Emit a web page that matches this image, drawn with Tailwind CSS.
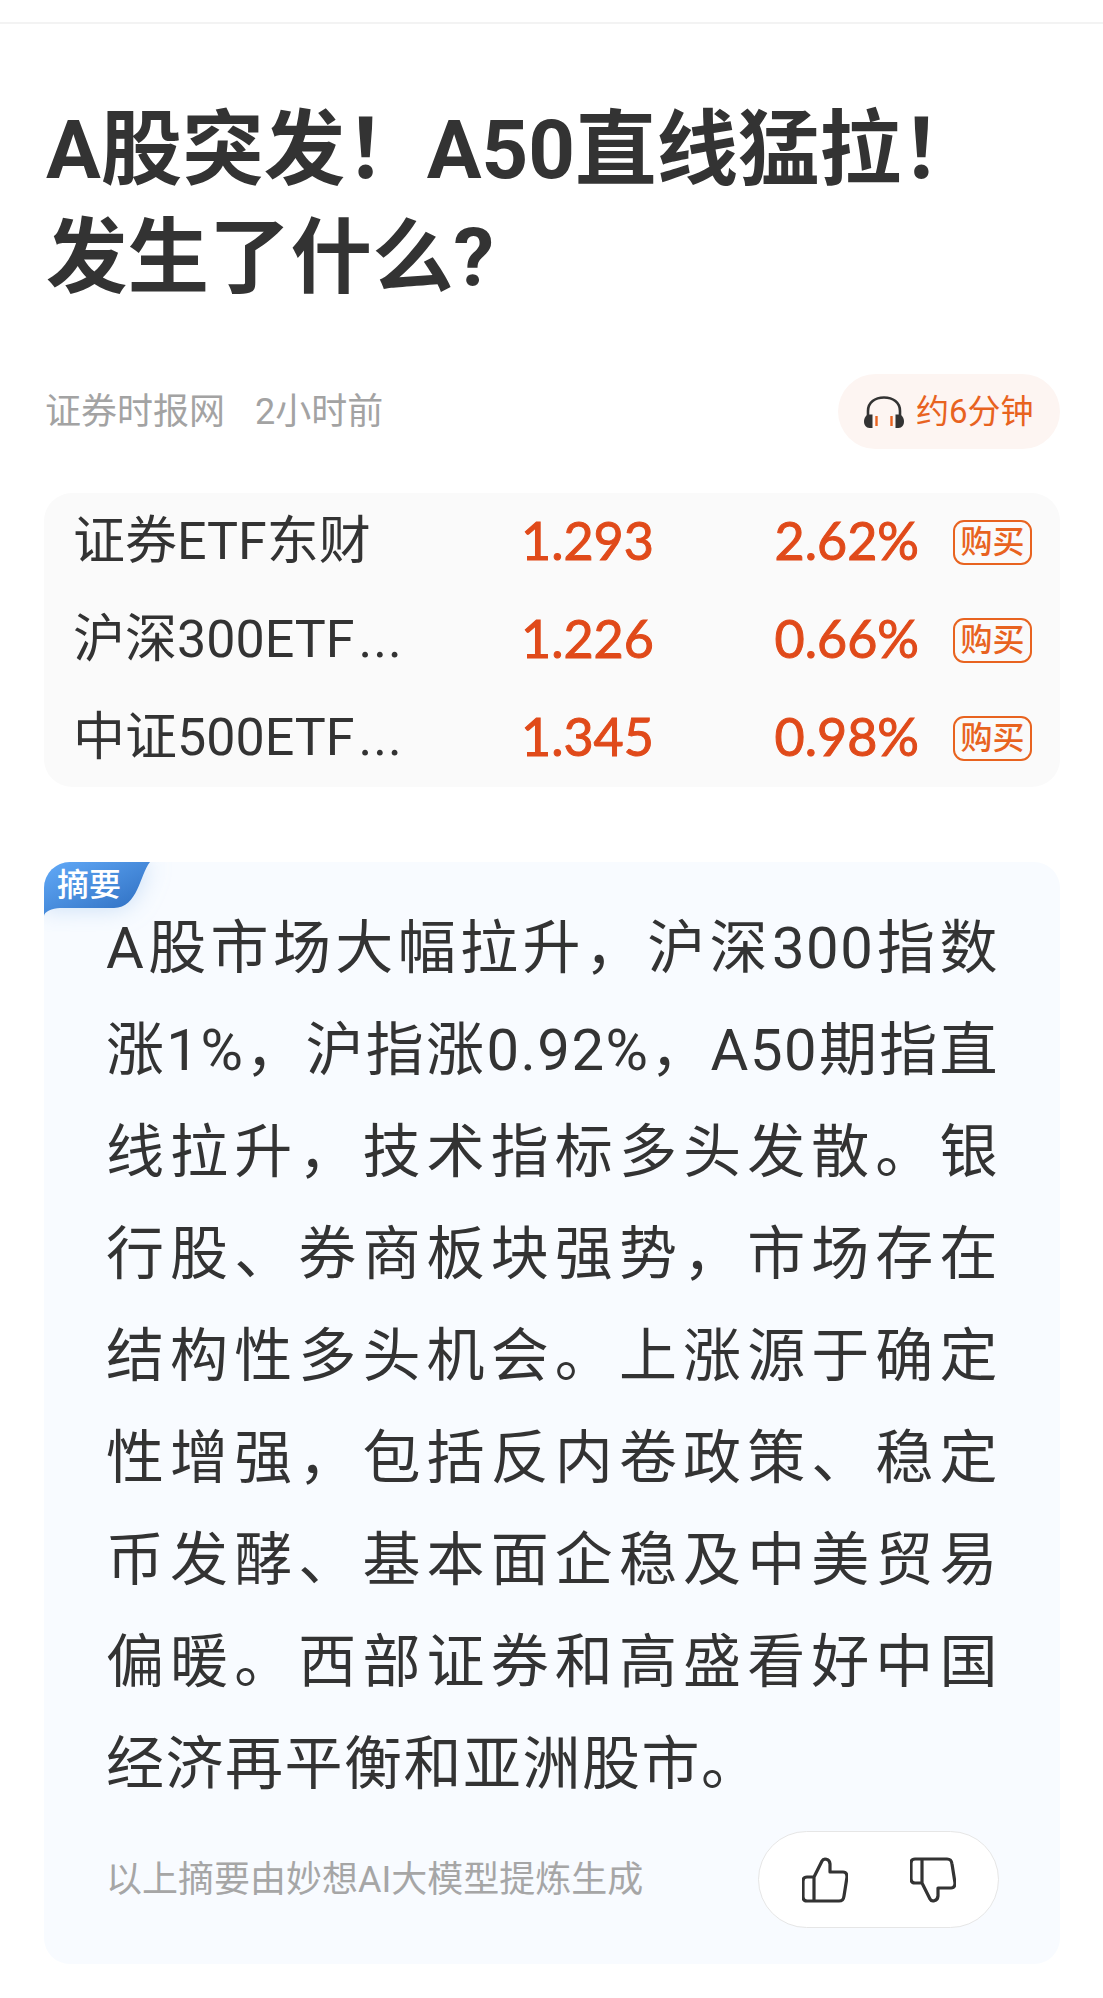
<!DOCTYPE html>
<html lang="zh-CN">
<head>
    <meta charset="UTF-8">
    <meta name="viewport" content="width=device-width, initial-scale=1.0">
    <title>A股突发！A50直线猛拉！发生了什么？</title>
    <script src="https://cdn.jsdelivr.net/npm/@tailwindcss/browser@4"></script>
</head>
<body class="bg-white font-['Roboto','Noto_Sans_CJK_SC',sans-serif] text-[#333]">
    <div class="w-[1103px] h-[1998px] overflow-hidden">
        <div class="h-[24px] border-b-2 border-[#f3f3f3]"></div>

        <div class="pl-[44px] pr-[43px]">
            <h1 class="mt-[72px] pl-[2px] text-[81.5px] leading-[108px] font-bold">A股突发！A50直线猛拉！<br>发生了什么?</h1>

            <!-- 来源 + 听文章 -->
            <div class="mt-[62px] flex items-center justify-between">
                <div class="text-[36px] text-[#a3a3a3] flex gap-[30px] pl-[1px]">
                    <span>证券时报网</span>
                    <span>2小时前</span>
                </div>
                <div class="h-[75px] w-[222px] rounded-full bg-[#fdf5f2] flex items-center pl-[26px] gap-[12px]">
                    <svg class="w-[40px] h-[32px]" viewBox="0 0 40 32" fill="none">
                        <path d="M4 22V15C4 6.5 11 1.5 20 1.5S36 6.5 36 15V22" stroke="#333" stroke-width="2.6"/>
                        <path d="M8.5 18.5V32H5.5C2 32 0 29 0 25.5S2 18.5 5.5 18.5Z" fill="#333"/>
                        <path d="M31.500 18.500V32H34.500C38 32 40 29 40 25.500S38 18.500 34.500 18.500Z" fill="#333"/>
                        <path d="M12.500 20V30M27.500 20V30" stroke="#e8631f" stroke-width="2.4"/>
                    </svg>
                    <span class="text-[33px] text-[#e8631f]">约6分钟</span>
                </div>
            </div>

            <!-- ETF 列表 -->
            <div class="mt-[44px] rounded-[28px] bg-[#fafafa]">
                <div class="h-[98px] flex items-center pl-[29px] pr-[28px]">
                    <div class="w-[448px] text-[52px]">证券ETF东财</div>
                    <div class="pb-[4px] font-['Lato'] [-webkit-text-stroke:1px_#e04a1a] text-[52px] text-[#e04a1a]">1.293</div>
                    <div class="pb-[4px] flex-1 text-right font-['Lato'] [-webkit-text-stroke:1px_#e04a1a] text-[52px] text-[#e04a1a]">2.62%</div>
                    <div class="ml-[34px] w-[79px] h-[45px] rounded-[11px] border-[2.5px] border-[#e8631f] text-[#e8631f] text-[32px] font-medium leading-[40px] text-center">购买</div>
                </div>
                <div class="h-[98px] flex items-center pl-[29px] pr-[28px]">
                    <div class="w-[448px] text-[52px]">沪深300ETF<span class="tracking-[1px] ml-[4px]">...</span></div>
                    <div class="pb-[4px] font-['Lato'] [-webkit-text-stroke:1px_#e04a1a] text-[52px] text-[#e04a1a]">1.226</div>
                    <div class="pb-[4px] flex-1 text-right font-['Lato'] [-webkit-text-stroke:1px_#e04a1a] text-[52px] text-[#e04a1a]">0.66%</div>
                    <div class="ml-[34px] w-[79px] h-[45px] rounded-[11px] border-[2.5px] border-[#e8631f] text-[#e8631f] text-[32px] font-medium leading-[40px] text-center">购买</div>
                </div>
                <div class="h-[98px] flex items-center pl-[29px] pr-[28px]">
                    <div class="w-[448px] text-[52px]">中证500ETF<span class="tracking-[1px] ml-[4px]">...</span></div>
                    <div class="pb-[4px] font-['Lato'] [-webkit-text-stroke:1px_#e04a1a] text-[52px] text-[#e04a1a]">1.345</div>
                    <div class="pb-[4px] flex-1 text-right font-['Lato'] [-webkit-text-stroke:1px_#e04a1a] text-[52px] text-[#e04a1a]">0.98%</div>
                    <div class="ml-[34px] w-[79px] h-[45px] rounded-[11px] border-[2.5px] border-[#e8631f] text-[#e8631f] text-[32px] font-medium leading-[40px] text-center">购买</div>
                </div>
            </div>

            <!-- 摘要 -->
            <div class="relative mt-[75px] rounded-[26px] bg-[#f8fbff] pt-[35px] pb-[36px] pl-[62px] pr-[61px]">
                <div class="absolute left-0 top-0 w-[190px] h-[100px] overflow-hidden rounded-tl-[26px]">
                    <svg class="absolute left-0 top-0" width="190" height="100" viewBox="0 0 190 100">
                        <defs>
                            <linearGradient id="badge" x1="0" y1="0" x2="1" y2="1">
                                <stop offset="0" stop-color="#62aaf8"/>
                                <stop offset="1" stop-color="#2a6abd"/>
                            </linearGradient>
                            <filter id="glow" x="-30%" y="-30%" width="160%" height="160%">
                                <feGaussianBlur stdDeviation="12"/>
                            </filter>
                        </defs>
                        <path d="M0 0H106C96 12 94 46 70 46H16C8 46 0 50 0 54Z" fill="#9fc4ee" fill-opacity="0.55" filter="url(#glow)"/>
                        <path d="M0 0H106C96 12 94 46 70 46H16C8 46 0 50 0 54Z" fill="url(#badge)"/>
                    </svg>
                    <span class="absolute left-[13px] top-[2px] text-[32px] font-medium leading-[42px] text-white">摘要</span>
                </div>

                <p class="relative text-[58px] leading-[102px] tracking-[1.5px] text-justify [text-align-last:justify]">A股市场大幅拉升，沪深300指数<br>涨1%，沪指涨0.92%，A50期指直<br>线拉升，技术指标多头发散。银<br>行股、券商板块强势，市场存在<br>结构性多头机会。上涨源于确定<br>性增强，包括反内卷政策、稳定<br>币发酵、基本面企稳及中美贸易<br>偏暖。西部证券和高盛看好中国</p>
                <p class="relative text-[58px] leading-[102px] tracking-[1.5px]">经济再平衡和亚洲股市。</p>

                <div class="mt-[16px] flex items-center justify-between">
                    <span class="text-[36px] text-[#a6a6a6]">以上摘要由妙想AI大模型提炼生成</span>
                    <div class="w-[241px] h-[97px] rounded-full bg-white border border-[#e6e6e6] flex items-center justify-center gap-[62px]">
                        <svg class="w-[46px] h-[46px]" viewBox="0 0 46 46" fill="none" stroke="#333" stroke-width="3.200" stroke-linejoin="round">
                            <path d="M12 44V20L20 4C21.500 1 27.500 1.500 28 7V15H41C44 15 45 17 45 20L42 39C41.500 43 40 44 37 44H5C2.500 44 1 42.500 1 40V24C1 21.500 2.500 20 5 20H12"/>
                        </svg>
                        <svg class="w-[46px] h-[46px] -scale-y-100" viewBox="0 0 46 46" fill="none" stroke="#333" stroke-width="3.200" stroke-linejoin="round">
                            <path d="M12 44V20L20 4C21.500 1 27.500 1.500 28 7V15H41C44 15 45 17 45 20L42 39C41.500 43 40 44 37 44H5C2.500 44 1 42.500 1 40V24C1 21.500 2.500 20 5 20H12"/>
                        </svg>
                    </div>
                </div>
            </div>
        </div>
    </div>
</body>
</html>
